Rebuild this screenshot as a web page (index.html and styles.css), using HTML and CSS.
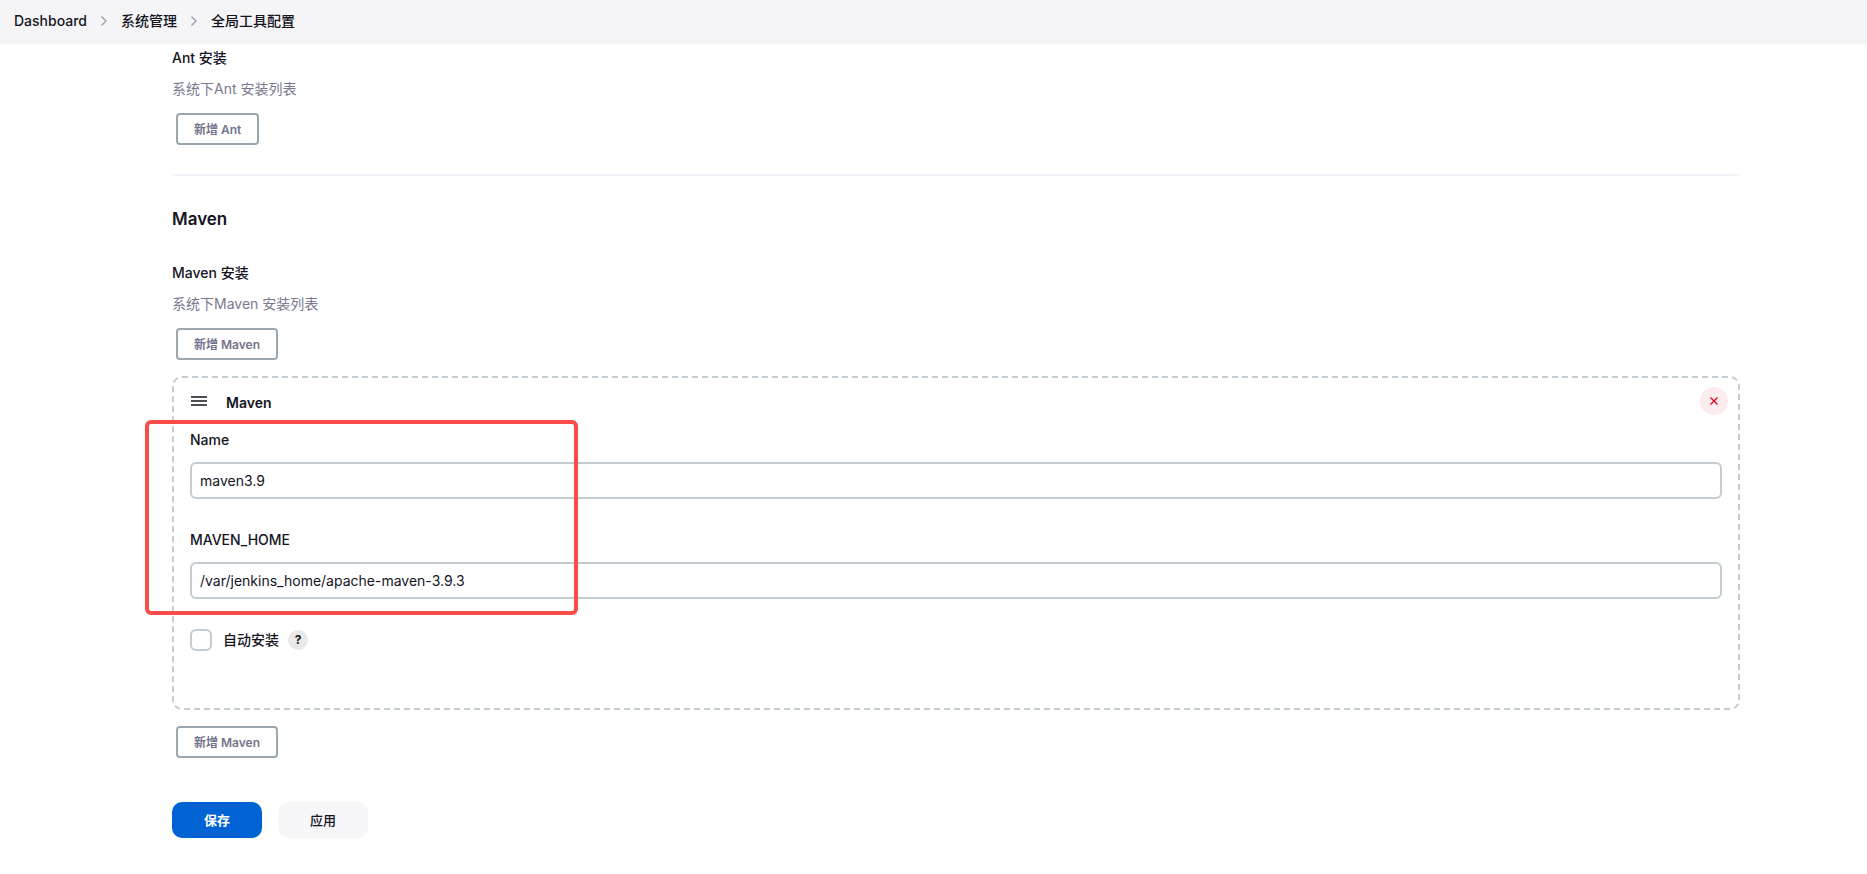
FILE: index.html
```
<!DOCTYPE html>
<html lang="zh-CN">
<head>
    <meta charset="UTF-8">
    <meta name="viewport" content="width=device-width, initial-scale=1.0">
    <title>全局工具配置</title>
    <link rel="stylesheet" href="styles.css">
</head>
<body>

    <nav class="breadcrumbs">
        <a href="#">Dashboard</a>
        <svg class="chevron" viewBox="0 0 8 12"><path d="M1.5 1.5L6 6l-4.500 4.500"/></svg>
        <a href="#">系统管理</a>
        <svg class="chevron" viewBox="0 0 8 12"><path d="M1.5 1.5L6 6l-4.500 4.500"/></svg>
        <a href="#">全局工具配置</a>
    </nav>

    <form class="config">
        <section class="tool">
            <h3 class="label">Ant 安装</h3>
            <p class="description">系统下Ant 安装列表</p>
            <button type="button" class="add">新增 Ant</button>
        </section>

        <section class="tool divided">
            <h2 class="title">Maven</h2>
            <h3 class="label">Maven 安装</h3>
            <p class="description">系统下Maven 安装列表</p>
            <button type="button" class="add">新增 Maven</button>

            <div class="chunk">
                <div class="chunk-header">
                    <svg class="handle" viewBox="0 0 16 10"><path d="M0 1h16M0 5h16M0 9h16"/></svg>
                    <b>Maven</b>
                    <button type="button" class="delete" aria-label="删除">
                        <svg viewBox="0 0 8 8"><path d="M.5.5l7 7M7.500.5l-7 7"/></svg>
                    </button>
                </div>

                <div class="fields">
                    <div class="field">
                        <label class="label" for="name">Name</label>
                        <input type="text" id="name" value="maven3.9">
                    </div>
                    <div class="field">
                        <label class="label" for="home">MAVEN_HOME</label>
                        <input type="text" id="home" value="/var/jenkins_home/apache-maven-3.9.3">
                    </div>
                    <div class="highlight"></div>
                </div>

                <div class="check">
                    <input type="checkbox" id="auto">
                    <label class="label" for="auto">自动安装</label>
                    <a class="help" href="#">?</a>
                </div>
            </div>

            <button type="button" class="add">新增 Maven</button>
        </section>

        <div class="actions">
            <button type="submit" class="save">保存</button>
            <button type="button" class="apply">应用</button>
        </div>
    </form>

</body>
</html>
```
FILE: styles.css
```
* {
    box-sizing: border-box;
}

body {
    margin: 0;
    background: #fff;
    color: #14141f;
    font-family: Inter, "Noto Sans CJK SC", sans-serif;
    font-size: 14px;
    line-height: 20px;
}

h2, h3, p {
    margin: 0;
}

button, input {
    font-family: inherit;
    color: inherit;
}

button {
    cursor: pointer;
}

svg {
    fill: none;
    stroke: currentColor;
}

.breadcrumbs {
    display: flex;
    align-items: center;
    height: 44px;
    padding: 0 14px 2px;
    background: #f5f5f7;
    font-weight: 500;
}

.breadcrumbs a {
    color: inherit;
    text-decoration: none;
}

.chevron {
    width: 8px;
    height: 12px;
    margin: 0 13px;
    color: #a5a5b8;
    stroke-width: 1.5;
}

.config {
    padding: 4px 127px 36px 172px;
}

.divided {
    margin-top: 29px;
    padding-top: 31px;
    border-top: 2px solid #f3f3f9;
}

.title {
    margin-bottom: 32px;
    font-size: 17px;
    font-weight: 600;
    line-height: 24px;
}

.label {
    display: block;
    font-size: 14px;
    font-weight: 500;
}

.description {
    margin: 11px 0 14px;
    color: #79798f;
}

.add {
    display: block;
    height: 32px;
    margin-left: 4px;
    padding: 0 16px 2px;
    border: 2px solid #9aa7af;
    border-radius: 4px;
    background: #fff;
    color: #73738c;
    font-size: 12px;
    font-weight: 600;
}

.chunk {
    margin: 16px 0;
    padding: 9px 16px 57px;
    border: 2px dashed #c3ccd1;
    border-radius: 10px;
}

.chunk-header {
    display: flex;
    align-items: center;
    gap: 19px;
    height: 28px;
    margin-right: -6px;
}

.chunk-header b {
    padding-top: 4px;
    font-weight: 600;
}

.handle {
    width: 16px;
    height: 10px;
    margin-left: 1px;
    stroke-width: 1.5;
}

.delete {
    display: flex;
    align-items: center;
    justify-content: center;
    width: 28px;
    height: 28px;
    margin-left: auto;
    padding: 0;
    border: none;
    border-radius: 50%;
    background: #fdecee;
    color: #e6001f;
}

.delete svg {
    width: 8px;
    height: 8px;
    stroke-width: 1.3;
}

.fields {
    position: relative;
    display: flex;
    flex-direction: column;
    gap: 31px;
    margin: 15px 0 30px;
}

.field .label {
    margin-bottom: 12px;
}

.field input {
    display: block;
    width: 100%;
    height: 37px;
    padding: 0 8px;
    border: 2px solid #c3cdd1;
    border-radius: 6px;
    background: #fff;
    font-size: 14px;
}

/* callout drawn over the two fields */
.highlight {
    position: absolute;
    top: -10px;
    bottom: -16px;
    left: -45px;
    width: 433px;
    border: 4px solid #fa4d4a;
    border-radius: 6px;
    pointer-events: none;
}

.check {
    display: flex;
    align-items: center;
}

.check input {
    appearance: none;
    width: 22px;
    height: 22px;
    margin: 0 11px 0 0;
    border: 2px solid #c3cdd1;
    border-radius: 6px;
    background: #fff;
}

.help {
    width: 20px;
    height: 20px;
    margin-left: 9px;
    border-radius: 50%;
    background: #e9e9ea;
    color: inherit;
    font-size: 12px;
    font-weight: 700;
    text-align: center;
    text-decoration: none;
}

.actions {
    display: flex;
    gap: 16px;
    margin-top: 44px;
}

.actions button {
    width: 90px;
    height: 36px;
    padding: 0 0 2px;
    border: none;
    border-radius: 10px;
    font-size: 13px;
    font-weight: 500;
}

.actions .save {
    background: #0062d3;
    color: #fff;
    font-weight: 600;
}

.actions .apply {
    background: #f7f7f9;
}
```
